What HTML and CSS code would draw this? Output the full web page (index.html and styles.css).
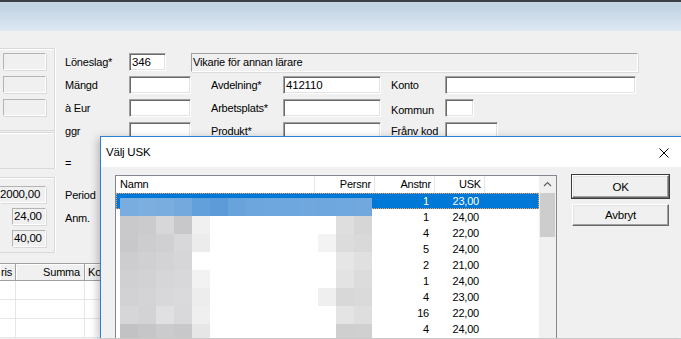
FILE: index.html
```html
<!DOCTYPE html>
<html lang="sv">

<head>
    <meta charset="UTF-8">
    <meta name="viewport" content="width=device-width, initial-scale=1.0">
    <title>Välj USK</title>
    <link rel="stylesheet" href="styles.css">
</head>

<body>
    <div class="titlebar"></div>

    <div class="form">
        <div class="side">
            <div class="group g1">
                <span class="ro"></span>
                <span class="ro"></span>
                <span class="ro"></span>
            </div>
            <div class="group g2"></div>
            <div class="group g3">
                <span class="ro total">2000,00</span>
                <span class="ro num">24,00</span>
                <span class="ro num">40,00</span>
            </div>
        </div>

        <div class="fields">
            <div class="row">
                <label class="lbl">Löneslag*</label>
                <span class="field code">346</span>
                <span class="desc">Vikarie för annan lärare</span>
            </div>
            <div class="row">
                <label class="lbl">Mängd</label>
                <span class="field f1"></span>
                <label class="lbl2">Avdelning*</label>
                <span class="field f2">412110</span>
                <label class="lbl3">Konto</label>
                <span class="field konto"></span>
            </div>
            <div class="row">
                <label class="lbl">à Eur</label>
                <span class="field f1"></span>
                <label class="lbl2">Arbetsplats*</label>
                <span class="field f2"></span>
                <label class="lbl3 low">Kommun</label>
                <span class="field kommun"></span>
            </div>
            <div class="row">
                <label class="lbl">ggr</label>
                <span class="field f1"></span>
                <label class="lbl2">Produkt*</label>
                <span class="field f2"></span>
                <label class="lbl3">Frånv kod</label>
                <span class="field franv"></span>
            </div>
            <div class="row gap"><label class="lbl">=</label></div>
            <div class="row gap"><label class="lbl">Period</label></div>
            <div class="row"><label class="lbl">Anm.</label></div>
        </div>

        <div class="sum-grid">
            <div class="grid-head">
                <span class="gc1">ris</span>
                <span class="gc2">Summa</span>
                <span class="gc3">Ko</span>
            </div>
            <div class="grid-row"><span class="gc1"></span><span class="gc2"></span><span class="gc3"></span></div>
            <div class="grid-row"><span class="gc1"></span><span class="gc2"></span><span class="gc3"></span></div>
            <div class="grid-row"><span class="gc1"></span><span class="gc2"></span><span class="gc3"></span></div>
        </div>
    </div>

    <div class="dialog">
        <div class="dialog-title">
            <span class="dialog-caption">Välj USK</span>
            <svg class="close-icon" width="10" height="10" viewBox="0 0 10 10">
                <path d="M0.5 0.5 L9.5 9.5 M9.5 0.5 L0.5 9.5" stroke="#000" stroke-width="1" fill="none"/>
            </svg>
        </div>

        <div class="dialog-body">
            <div class="listview">
                <div class="list-main">
                    <div class="list-head">
                        <span class="col-namn">Namn</span>
                        <span class="col-pnr">Persnr</span>
                        <span class="col-anst">Anstnr</span>
                        <span class="col-usk">USK</span>
                        <span class="col-rest"></span>
                    </div>
                    <div class="list-rows">
                        <div class="list-row selected"><span></span><span></span><span>1</span><span>23,00</span></div>
                        <div class="list-row"><span></span><span></span><span>1</span><span>24,00</span></div>
                        <div class="list-row"><span></span><span></span><span>4</span><span>22,00</span></div>
                        <div class="list-row"><span></span><span></span><span>5</span><span>24,00</span></div>
                        <div class="list-row"><span></span><span></span><span>2</span><span>21,00</span></div>
                        <div class="list-row"><span></span><span></span><span>1</span><span>24,00</span></div>
                        <div class="list-row"><span></span><span></span><span>4</span><span>23,00</span></div>
                        <div class="list-row"><span></span><span></span><span>16</span><span>22,00</span></div>
                        <div class="list-row"><span></span><span></span><span>4</span><span>24,00</span></div>

                        <!-- maskade namn / personnummer -->
                        <div class="mask mask-sel"></div>
                        <div class="mask-names">
                            <div class="band"></div>
                            <div class="band"></div>
                            <div class="band"></div>
                            <div class="band"></div>
                            <div class="band"></div>
                            <div class="band"></div>
                            <div class="band"></div>
                        </div>
                        <div class="mask-pnr">
                            <div class="band"></div>
                            <div class="band"></div>
                            <div class="band"></div>
                            <div class="band"></div>
                            <div class="band"></div>
                            <div class="band"></div>
                            <div class="band"></div>
                        </div>
                    </div>
                </div>
                <div class="scrollbar">
                    <svg class="arrow-up" width="17" height="17" viewBox="0 0 17 17">
                        <path d="M5 10 L8.5 6.5 L12 10" stroke="#606060" stroke-width="1.2" fill="none"/>
                    </svg>
                    <div class="thumb"></div>
                </div>
            </div>

            <div class="buttons">
                <button type="button" class="btn default">OK</button>
                <button type="button" class="btn">Avbryt</button>
            </div>
        </div>
    </div>
</body>

</html>
```

FILE: styles.css
```css
html {
    overflow: hidden;
}

body {
    margin: 0;
    height: 339px;
    overflow: hidden;
    position: relative;
    background-color: #f0f0f0;
    font-family: "Liberation Sans", Arial, sans-serif;
    font-size: 11px;
    letter-spacing: -0.2px;
    color: #000;
}

.titlebar {
    height: 29px;
    border-top: 2px solid #3b4047;
    background: linear-gradient(#c9d6e0 0, #c1d3e1 4px, #d3e0ee 20px, #dee8f4 100%);
}

/* ---------- huvudformulär ---------- */

.form {
    display: grid;
    grid-template-columns: 55px 1fr;
}

.side {
    display: flex;
    flex-direction: column;
}

.group {
    box-sizing: border-box;
    width: 55px;
    border: 1px solid #d9d9d9;
    border-left: none;
    box-shadow: inset 0 1px #fff, 1px 0 #fff;
}

.g1 {
    margin-top: 17px;
    height: 83px;
    display: flex;
    flex-direction: column;
    gap: 6px;
    padding: 4px 0 0 3px;
}

.g2 {
    margin-top: 1px;
    height: 37px;
}

.g3 {
    margin-top: 8px;
    height: 76px;
    display: flex;
    flex-direction: column;
    gap: 5px;
    padding-top: 8px;
}

.ro {
    display: block;
    box-sizing: border-box;
    height: 17px;
    width: 43px;
    background-color: #f0f0f0;
    border: 1px solid;
    border-color: #b4b4b4 #fff #fff #b4b4b4;
    box-shadow: 1px 1px #d9d9d9;
    line-height: 15px;
    font-size: 11.5px;
}

.total {
    width: 46px;
    text-align: right;
    padding-right: 8px;
    border-left: none;
}

.num {
    width: 34px;
    margin-left: 12px;
    padding-left: 1px;
}

.fields {
    padding: 22px 0 0 10px;
    display: flex;
    flex-direction: column;
}

.row {
    display: flex;
    align-items: center;
    height: 18px;
    margin-bottom: 5px;
    white-space: nowrap;
}

.row.gap {
    margin-top: 9px;
}

.lbl {
    width: 64px;
}

.lbl2 {
    width: 72px;
    margin-left: 20px;
}

.lbl3 {
    width: 54px;
    margin-left: 10px;
}

.low {
    padding-top: 4px;
}

.field {
    box-sizing: border-box;
    height: 18px;
    background-color: #fff;
    border: 1px solid;
    border-color: #a0a0a0 #fff #fff #a0a0a0;
    box-shadow: inset 1px 1px #696969, inset -1px -1px #e3e3e3;
    padding-left: 2px;
    line-height: 16px;
    font-size: 11.5px;
}

.code {
    width: 37px;
}

.f1 {
    width: 62px;
}

.f2 {
    width: 98px;
}

.konto {
    width: 191px;
}

.kommun {
    width: 29px;
}

.franv {
    width: 53px;
}

.desc {
    box-sizing: border-box;
    width: 447px;
    height: 19px;
    margin-left: 25px;
    background-color: #f0f0f0;
    border: 1px solid;
    border-color: #a0a0a0 #fff #fff #a0a0a0;
    box-shadow: 1px 1px #dcdcdc;
    padding-left: 1px;
    line-height: 16px;
}

/* ---------- rader längst ned ---------- */

.sum-grid {
    grid-column: 1 / 3;
    margin-top: 10px;
    width: 160px;
    border-top: 1px solid #a0a0a0;
}

.grid-head,
.grid-row {
    display: flex;
}

.grid-head span {
    box-sizing: border-box;
    height: 17px;
    line-height: 16px;
    background-color: #f0f0f0;
    border-right: 1px solid #a0a0a0;
    box-shadow: inset 1px 1px #fff;
    border-bottom: 1px solid #a0a0a0;
}

.grid-row span {
    box-sizing: border-box;
    height: 19px;
    background-color: #fff;
    border-right: 1px solid #e6e6e6;
    border-bottom: 1px solid #e6e6e6;
}

.gc1 {
    width: 16px;
    text-align: right;
    padding-right: 3px;
}

.gc2 {
    width: 69px;
    text-align: right;
    padding-right: 4px;
}

.gc3 {
    flex: 1;
    padding-left: 3px;
}

/* ---------- dialog ---------- */

.dialog {
    position: absolute;
    left: 100px;
    top: 136px;
    width: 585px;
    height: 201px;
    overflow: hidden;
    border: 1px solid #2b80d6;
    border-bottom: none;
    background-color: #f0f0f0;
    box-shadow: -2px 2px 8px rgba(0, 0, 0, 0.25);
}

.dialog-title {
    height: 30px;
    background-color: #fff;
    display: flex;
    align-items: center;
    justify-content: space-between;
    padding-left: 5px;
}

.dialog-caption {
    font-size: 11.5px;
}

.close-icon {
    margin-right: 17px;
    margin-top: 1px;
}

.dialog-body {
    display: flex;
    align-items: flex-start;
    padding: 8px 0 0 14px;
}

.listview {
    display: flex;
    width: 442px;
    height: 200px;
    box-sizing: border-box;
    border: 1px solid #828790;
    background-color: #fff;
}

.list-main {
    flex: 1;
    overflow: hidden;
}

.list-head {
    display: flex;
    height: 17px;
    line-height: 16px;
}

.list-head span {
    box-sizing: border-box;
    border-right: 1px solid #e5e5e5;
    padding: 0 3px;
}

.col-namn {
    width: 199px;
    padding-left: 4px !important;
}

.col-pnr {
    width: 60px;
    text-align: right;
}

.col-anst {
    width: 60px;
    text-align: right;
}

.col-usk {
    width: 50px;
    text-align: right;
}

.col-rest {
    flex: 1;
    border-right: none !important;
}

.list-rows {
    position: relative;
}

.list-row {
    display: grid;
    grid-template-columns: 199px 60px 60px 50px 1fr;
    height: 16px;
    line-height: 16px;
}

.list-row span:nth-child(3),
.list-row span:nth-child(4) {
    text-align: right;
    padding-right: 6px;
}

.list-row.selected {
    background-color: #0078d7;
    color: #fff;
    outline: 1px dotted #f4a460;
    outline-offset: -1px;
}

.mask {
    position: absolute;
}

.mask-sel {
    left: 4px;
    top: 5px;
    width: 252px;
    height: 18px;
    background: linear-gradient(90deg,
        #79ade0 0 18px, #7daee0 0 36px, #79acdf 0 54px, #74a9de 0 72px,
        #62a0db 0 90px, #5d9ad8 0 108px, #68a3dc 0 126px, #6da6dd 0 144px,
        #6ea7de 0 162px, #6da7de 0 180px, #70a8de 0 198px, #6ea7de 0 216px,
        #6fa8df 0 234px, #71a9df 0 252px);
}

.mask-names,
.mask-pnr {
    position: absolute;
    top: 23px;
    display: flex;
    flex-direction: column;
}

.mask-names {
    left: 4px;
    width: 90px;
}

.mask-pnr {
    left: 202px;
    width: 54px;
}

.band {
    height: 18px;
}

.mask-names .band:nth-child(1) { background: linear-gradient(90deg, #c9c9cb 0 18px, #cbcbcd 0 36px, #d7d7d9 0 54px, #c8c8ca 0 72px, #f0f0f0 0 90px); }
.mask-names .band:nth-child(2) { background: linear-gradient(90deg, #c8c8ca 0 18px, #cdcdcf 0 36px, #d0d0d2 0 54px, #d8d8da 0 72px, #ececec 0 90px); }
.mask-names .band:nth-child(3) { background: linear-gradient(90deg, #cdcdcf 0 18px, #d0d0d2 0 36px, #d3d3d5 0 54px, #d6d6d8 0 72px, #ffffff 0 90px); }
.mask-names .band:nth-child(4) { background: linear-gradient(90deg, #d0d0d2 0 18px, #d2d2d4 0 36px, #d6d6d8 0 54px, #d8d8da 0 72px, #f2f2f2 0 90px); }
.mask-names .band:nth-child(5) { background: linear-gradient(90deg, #d2d2d4 0 18px, #d4d4d6 0 36px, #d8d8da 0 54px, #dadadc 0 72px, #ededed 0 90px); }
.mask-names .band:nth-child(6) { background: linear-gradient(90deg, #d6d6d8 0 18px, #d3d3d5 0 36px, #e0e0e2 0 54px, #d9d9db 0 72px, #efefef 0 90px); }
.mask-names .band:nth-child(7) { background: linear-gradient(90deg, #c2c2c4 0 18px, #c6c6c8 0 36px, #cbcbcd 0 54px, #c8c8ca 0 72px, #e6e6e6 0 90px); }

.mask-pnr .band:nth-child(1) { background: linear-gradient(90deg, #ffffff 0 18px, #dedede 0 36px, #d6d6d6 0 54px); }
.mask-pnr .band:nth-child(2) { background: linear-gradient(90deg, #f3f3f3 0 18px, #dcdcdc 0 36px, #d9d9d9 0 54px); }
.mask-pnr .band:nth-child(3) { background: linear-gradient(90deg, #ffffff 0 18px, #e6e6e6 0 36px, #e0e0e0 0 54px); }
.mask-pnr .band:nth-child(4) { background: linear-gradient(90deg, #ffffff 0 18px, #e3e3e3 0 36px, #dcdcdc 0 54px); }
.mask-pnr .band:nth-child(5) { background: linear-gradient(90deg, #efefef 0 18px, #d8d8d8 0 36px, #dadada 0 54px); }
.mask-pnr .band:nth-child(6) { background: linear-gradient(90deg, #ffffff 0 18px, #e4e4e4 0 36px, #dedede 0 54px); }
.mask-pnr .band:nth-child(7) { background: linear-gradient(90deg, #ffffff 0 18px, #cfcfcf 0 36px, #d0d0d0 0 54px); }

.scrollbar {
    width: 17px;
    background-color: #f0f0f0;
    display: flex;
    flex-direction: column;
}

.arrow-up {
    display: block;
}

.thumb {
    margin: 0 1px;
    height: 44px;
    background-color: #cdcdcd;
}

.buttons {
    display: flex;
    flex-direction: column;
    gap: 6px;
    margin-left: 15px;
}

.btn {
    box-sizing: border-box;
    width: 97px;
    height: 22px;
    padding: 0;
    font-family: inherit;
    font-size: 11.5px;
    letter-spacing: -0.2px;
    color: #000;
    background-color: #f0f0f0;
    border: 1px solid;
    border-color: #fff #696969 #696969 #fff;
    box-shadow: inset -1px -1px #a0a0a0, inset 1px 1px #e3e3e3;
}

.btn.default {
    height: 23px;
    outline: 1px solid #3c3c3c;
    outline-offset: 0;
}
```
